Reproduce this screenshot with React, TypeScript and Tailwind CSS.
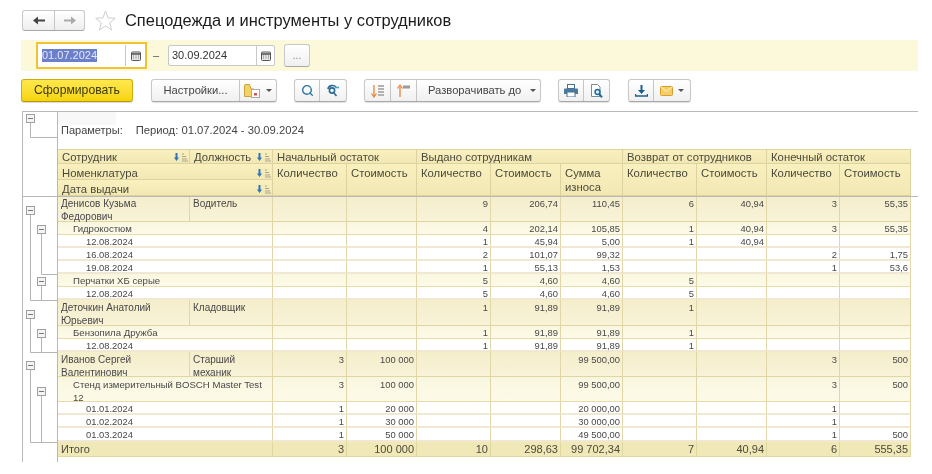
import type { ReactNode } from "react";
import { Search } from "lucide-react";

type Row = {
  level: 0 | 1 | 2;
  name: string;
  job?: string;
  h: string;
  inner: string;
  vals: string[];
};

const PERSON = "h-[25px] pt-[2px] leading-[12.7px]";
const PERSON_LOW = "h-[24px] pt-[2px] leading-[12.5px]";
const ITEM = "h-[12px] pt-px leading-[12px]";
const DATE = "h-[11px] pt-px leading-[11px]";

const ROWS: Row[] = [
  { level: 0, name: "Денисов Кузьма\nФедорович", job: "Водитель", h: "h-[26px]", inner: PERSON, vals: ["", "", "9", "206,74", "110,45", "6", "40,94", "3", "55,35"] },
  { level: 1, name: "Гидрокостюм", h: "h-[13px]", inner: ITEM, vals: ["", "", "4", "202,14", "105,85", "1", "40,94", "3", "55,35"] },
  { level: 2, name: "12.08.2024", h: "h-[13px]", inner: DATE, vals: ["", "", "1", "45,94", "5,00", "1", "40,94", "", ""] },
  { level: 2, name: "16.08.2024", h: "h-[13px]", inner: DATE, vals: ["", "", "2", "101,07", "99,32", "", "", "2", "1,75"] },
  { level: 2, name: "19.08.2024", h: "h-[13px]", inner: DATE, vals: ["", "", "1", "55,13", "1,53", "", "", "1", "53,6"] },
  { level: 1, name: "Перчатки ХБ серые", h: "h-[13px]", inner: ITEM, vals: ["", "", "5", "4,60", "4,60", "5", "", "", ""] },
  { level: 2, name: "12.08.2024", h: "h-[13px]", inner: DATE, vals: ["", "", "5", "4,60", "4,60", "5", "", "", ""] },
  { level: 0, name: "Деточкин Анатолий\nЮрьевич", job: "Кладовщик", h: "h-[26px]", inner: PERSON, vals: ["", "", "1", "91,89", "91,89", "1", "", "", ""] },
  { level: 1, name: "Бензопила Дружба", h: "h-[13px]", inner: ITEM, vals: ["", "", "1", "91,89", "91,89", "1", "", "", ""] },
  { level: 2, name: "12.08.2024", h: "h-[13px]", inner: DATE, vals: ["", "", "1", "91,89", "91,89", "1", "", "", ""] },
  { level: 0, name: "Иванов Сергей\nВалентинович", job: "Старший\nмеханик", h: "h-[25px]", inner: PERSON_LOW, vals: ["3", "100 000", "", "", "99 500,00", "", "", "3", "500"] },
  { level: 1, name: "Стенд измерительный BOSCH Master Test\n12", h: "h-[25px]", inner: PERSON_LOW, vals: ["3", "100 000", "", "", "99 500,00", "", "", "3", "500"] },
  { level: 2, name: "01.01.2024", h: "h-[13px]", inner: DATE, vals: ["1", "20 000", "", "", "20 000,00", "", "", "1", ""] },
  { level: 2, name: "01.02.2024", h: "h-[13px]", inner: DATE, vals: ["1", "30 000", "", "", "30 000,00", "", "", "1", ""] },
  { level: 2, name: "01.03.2024", h: "h-[14px]", inner: "h-[12px] pt-px leading-[11px]", vals: ["1", "50 000", "", "", "49 500,00", "", "", "1", "500"] },
];

const TOTALS = ["3", "100 000", "10", "298,63", "99 702,34", "7", "40,94", "6", "555,35"];

const COLS = [132, 83, 74, 70, 74, 70, 62, 74, 70, 73, 71];

const LEVEL_BG = {
  0: "bg-linear-to-b from-[#f5eecb] to-[#f8f3d9] border-b-[#e0d6a0]",
  1: "bg-linear-to-b from-[#f9f6e0] to-[#fdfbe8] border-b-[#e6dcaa]",
  2: "bg-white border-b-2 border-b-[#f0e8d2]",
};
const LEVEL_PAD = { 0: "pl-[3px] text-[10px]", 1: "pl-[15px] text-[9.6px]", 2: "pl-[28px]" };
const HEAD = "bg-linear-to-b from-[#f9f0bf] to-[#f2e8b4] border-b border-r border-[#ded3a0] pl-[4px] align-top text-[11.3px] text-[#4b4a3c] font-normal text-left";
const HEAD_SUB = `${HEAD} pt-[3px] leading-[12px]`;
const HEAD_SPAN = `${HEAD} pt-[2px] leading-[14px]`;

function SortIcon() {
  return (
    <svg width="16" height="10" viewBox="0 0 16 10" className="shrink-0">
      <path d="M3.5 1v5.5" stroke="#2f74b5" strokeWidth="2" />
      <path d="M1 5.5h5L3.5 9z" fill="#2f74b5" />
      <path d="M9 2h2M9 4.5h4M9 7h5M9 9h6" stroke="#a9a68c" strokeWidth="1" />
    </svg>
  );
}

function Caret() {
  return (
    <svg width="6" height="3" viewBox="0 0 6 3" className="shrink-0">
      <path d="M0 0h6L3 3z" fill="#555" />
    </svg>
  );
}

function CalendarIcon() {
  return (
    <svg width="10" height="10" viewBox="0 0 10 10">
      <rect x="0.5" y="1" width="9" height="8.5" rx="1" fill="#e6e6e6" stroke="#555" />
      <path d="M0.5 3h9" stroke="#444" strokeWidth="1.4" />
      <path d="M2 5h1M4.5 5h1M7 5h1M2 7h1M4.5 7h1M7 7h1" stroke="#777" />
    </svg>
  );
}

function ExpandIcon({ up }: { up?: boolean }) {
  return (
    <svg width="14" height="14" viewBox="0 0 14 14">
      {up ? (
        <>
          <path d="M3 13V3" stroke="#e8813a" strokeWidth="1.3" />
          <path d="M0.5 4.5L3 1l2.5 3.5" fill="none" stroke="#e8813a" strokeWidth="1.2" />
          <rect x="6" y="1.5" width="7" height="3" fill="#9c9c9c" />
        </>
      ) : (
        <>
          <path d="M3 1v11" stroke="#e8813a" strokeWidth="1.3" />
          <path d="M0.5 9.5L3 13l2.5-3.5" fill="none" stroke="#e8813a" strokeWidth="1.2" />
          <path d="M7 2h6M7 5h6M7 8h6M7 11h6" stroke="#9c9c9c" strokeWidth="1.6" />
        </>
      )}
    </svg>
  );
}

function Seg({ w, children, last }: { w: string; children: ReactNode; last?: boolean }) {
  return (
    <div className={`${w} h-full flex items-center justify-center gap-[5px] ${last ? "" : "border-r border-[#c6c6c6]"}`}>
      {children}
    </div>
  );
}

function Group({ children }: { children: ReactNode }) {
  return (
    <div className="h-[23px] flex rounded-[3px] border border-[#c8c8c8] border-b-[#a8a8a8] bg-linear-to-b from-white to-[#f0f0f0] shadow-[0_1px_1px_rgba(0,0,0,0.12)]">
      {children}
    </div>
  );
}

function Tree() {
  const line = "#b4b4b4";
  const box = (x: number, y: number) => (
    <g key={`${x}-${y}`}>
      <rect x={x + 0.5} y={y + 0.5} width="8" height="8" fill="#f4f4f4" stroke="#a0a0a0" />
      <path d={`M${x + 2} ${y + 4.5}h5`} stroke="#777" />
    </g>
  );
  return (
    <svg width="36" height="351" viewBox="0 0 36 351" className="block">
      <g fill="none" stroke={line} strokeWidth="1">
        <path d="M8.5 11V26.5H36" />
        <path d="M8.5 103V189.5H36" />
        <path d="M19.5 122V163.5H36" />
        <path d="M19.5 174V189" />
        <path d="M8.5 207V241.5H36" />
        <path d="M19.5 226V241" />
        <path d="M8.5 258V331.5H36" />
        <path d="M19.5 284V331" />
      </g>
      {[
        [4, 3],
        [4, 95],
        [15, 114],
        [15, 166],
        [4, 199],
        [15, 218],
        [4, 250],
        [15, 276],
      ].map(([x, y]) => box(x, y))}
    </svg>
  );
}

function HeadTop({ colSpan, children }: { colSpan?: number; children: ReactNode }) {
  return (
    <th colSpan={colSpan} className={`${HEAD} border-t`}>
      <div className="h-[13px] pt-px leading-[13px] flex items-center justify-between whitespace-nowrap">{children}</div>
    </th>
  );
}

function Report() {
  return (
    <table className="table-fixed border-separate border-spacing-0 w-[853px]">
      <colgroup>
        {COLS.map((w, i) => (
          <col key={i} style={{ width: w }} />
        ))}
      </colgroup>
      <thead>
        <tr className="h-[15px]">
          <HeadTop>
            Сотрудник
            <SortIcon />
          </HeadTop>
          <HeadTop>
            Должность
            <SortIcon />
          </HeadTop>
          <HeadTop colSpan={2}>Начальный остаток</HeadTop>
          <HeadTop colSpan={3}>Выдано сотрудникам</HeadTop>
          <HeadTop colSpan={2}>Возврат от сотрудников</HeadTop>
          <HeadTop colSpan={2}>Конечный остаток</HeadTop>
        </tr>
        <tr className="h-[16px]">
          <th colSpan={2} className={HEAD_SUB}>
            <div className="h-[12px] flex items-center justify-between">
              Номенклатура
              <SortIcon />
            </div>
          </th>
          {["Количество", "Стоимость", "Количество", "Стоимость"].map((t, i) => (
            <th key={i} rowSpan={2} className={HEAD_SPAN}>{t}</th>
          ))}
          <th rowSpan={2} className={HEAD_SPAN}>Сумма<br />износа</th>
          {["Количество", "Стоимость", "Количество", "Стоимость"].map((t, i) => (
            <th key={i} rowSpan={2} className={HEAD_SPAN}>{t}</th>
          ))}
        </tr>
        <tr className="h-[16px]">
          <th colSpan={2} className={HEAD_SUB}>
            <div className="h-[12px] flex items-center justify-between">
              Дата выдачи
              <SortIcon />
            </div>
          </th>
        </tr>
      </thead>
      <tbody className="text-[9.4px] text-[#484848]">
        {ROWS.map((r, i) => {
          const cell = `${r.h} ${LEVEL_BG[r.level]} border-b border-r border-r-[#e0d6a8] align-top`;
          return (
            <tr key={i}>
              {r.job ? (
                <>
                  <td className={`${cell} ${LEVEL_PAD[0]} whitespace-pre-line`}><div className={r.inner}>{r.name}</div></td>
                  <td className={`${cell} ${LEVEL_PAD[0]} whitespace-pre-line`}><div className={r.inner}>{r.job}</div></td>
                </>
              ) : (
                <td colSpan={2} className={`${cell} ${LEVEL_PAD[r.level]} whitespace-pre-line`}><div className={r.inner}>{r.name}</div></td>
              )}
              {r.vals.map((v, j) => (
                <td key={j} className={`${cell} text-right pr-[2px] ${j === 6 ? "border-r-[#d2bf82]" : ""}`}><div className={r.inner}>{v}</div></td>
              ))}
            </tr>
          );
        })}
        <tr className="h-[15px]">
          <td colSpan={2} className="bg-[#f1e8b8] border-b border-r border-[#e0d6a0] pl-[3px] pt-px text-[11px] leading-[13px] text-[#4b4a3c]">Итого</td>
          {TOTALS.map((v, j) => (
            <td key={j} className="bg-[#f1e8b8] border-b border-r border-[#e0d6a0] text-right pr-[2px] pt-px text-[11px] leading-[13px] text-[#4b4a3c]">{v}</td>
          ))}
        </tr>
      </tbody>
    </table>
  );
}

export default function App() {
  return (
    <div className="w-[932px] h-[474px] overflow-hidden bg-white pt-[10px] blur-[0.4px] font-['Liberation_Sans',sans-serif]">
      {/* Title */}
      <div className="h-[21px] pl-[22px] flex items-center">
        <div className="w-[63px] h-[21px] flex rounded-[3px] border border-[#c8c8c8] border-b-[#a8a8a8] bg-linear-to-b from-white to-[#eeeeee]">
          <Seg w="w-[32px]">
            <svg width="12" height="9" viewBox="0 0 12 9">
              <path d="M12 4.5H4" stroke="#444" strokeWidth="2" />
              <path d="M5 0.5L0 4.5 5 8.5z" fill="#444" />
            </svg>
          </Seg>
          <Seg w="flex-1" last>
            <svg width="12" height="9" viewBox="0 0 12 9">
              <path d="M0 4.5H8" stroke="#aaa" strokeWidth="2" />
              <path d="M7 0.5l5 4-5 4z" fill="#aaa" />
            </svg>
          </Seg>
        </div>
        <svg width="21" height="21" viewBox="0 0 21 21" className="ml-[10px]">
          <path d="M10.5 1l2.6 6.9 7.2.4-5.6 4.6 1.9 7-6.1-4-6.1 4 1.9-7L.7 8.3l7.2-.4z" fill="#fff" stroke="#c8c8c8" strokeWidth="0.9" />
        </svg>
        <h1 className="ml-[9px] text-[16.45px] leading-[21px] font-normal text-[#1c1c1c] whitespace-nowrap">Спецодежда и инструменты у сотрудников</h1>
      </div>

      {/* Period */}
      <div className="mt-[9px] ml-[21px] w-[897px] h-[31px] bg-[#fbf9da] flex items-center text-[11px] text-[#333]">
        <div className="ml-[15px] w-[111px] h-[27px] border-2 border-[#f2c230] bg-white flex items-center">
          <span className="ml-[4px] bg-[#6c7fca] text-[#e4e8f6] leading-[13px]">01.07.2024</span>
          <div className="ml-auto w-[20px] h-[21px] border-l border-[#c8c8c8] flex items-center justify-center">
            <CalendarIcon />
          </div>
        </div>
        <span className="ml-[6px] w-[15px] text-[#555]">–</span>
        <div className="w-[107px] h-[21px] border border-[#c8c8c8] rounded-[2px] bg-white flex items-center">
          <span className="ml-[3px]">30.09.2024</span>
          <div className="ml-auto w-[18px] h-full border-l border-[#c8c8c8] flex items-center justify-center">
            <CalendarIcon />
          </div>
        </div>
        <div className="ml-[9px] w-[26px] h-[23px] rounded-[3px] border border-[#c8c8c8] border-b-[#a8a8a8] bg-linear-to-b from-white to-[#f0f0f0] flex items-center justify-center text-[#888] text-[10px]">...</div>
      </div>

      {/* Toolbar */}
      <div className="mt-[8px] ml-[21px] h-[23px] flex items-center text-[11.2px] text-[#444]">
        <div className="w-[112px] h-[23px] rounded-[3px] border border-[#d0ac10] border-b-[#b59510] bg-linear-to-b from-[#ffe84a] to-[#f6d400] flex items-center justify-center text-[#3d3a10] text-[12.2px] shadow-[0_1px_1px_rgba(0,0,0,0.15)]">Сформировать</div>

        <div className="ml-[18px]">
          <Group>
            <Seg w="w-[88px]">Настройки...</Seg>
            <Seg w="w-[36px]" last>
              <svg width="17" height="15" viewBox="0 0 17 15">
                <path d="M0.5 3V13.5H10V6H7L5.5 1.5H1z" fill="#f3d267" stroke="#c9a13a" />
                <rect x="7.5" y="6.5" width="8" height="8" fill="#fff" stroke="#aaa" />
                <rect x="10" y="10" width="3" height="2.5" fill="#d9534f" />
              </svg>
              <Caret />
            </Seg>
          </Group>
        </div>

        <div className="ml-[17px]">
          <Group>
            <Seg w="w-[25px]"><Search size={13} strokeWidth={2.6} className="text-[#2a74a8]" /></Seg>
            <Seg w="w-[26px]" last>
              <svg width="14" height="13" viewBox="0 0 14 13" fill="none" stroke="#2a6a96" strokeWidth="1.6">
                <path d="M2 5a4.5 4 0 0 1 8-2" />
                <circle cx="6" cy="6.5" r="2.6" />
                <path d="M8 9l2.5 3" />
                <path d="M9 3.5h4" stroke="#4aa3c8" />
              </svg>
            </Seg>
          </Group>
        </div>

        <div className="ml-[17px]">
          <Group>
            <Seg w="w-[26px]"><ExpandIcon /></Seg>
            <Seg w="w-[26px]"><ExpandIcon up /></Seg>
            <div className="w-[123px] h-full flex items-center pl-[11px] whitespace-nowrap">
              Разворачивать до
              <span className="ml-[9px]"><Caret /></span>
            </div>
          </Group>
        </div>

        <div className="ml-[17px]">
          <Group>
            <Seg w="w-[25px]">
              <svg width="14" height="13" viewBox="0 0 14 13">
                <rect x="3.5" y="0.5" width="7" height="4" fill="#fff" stroke="#48708f" />
                <path d="M1 4.5h12a1 1 0 0 1 1 1V10H0V5.5a1 1 0 0 1 1-1z" fill="#4a7aa2" />
                <rect x="3" y="8" width="8" height="5" fill="#fff" stroke="#48708f" />
              </svg>
            </Seg>
            <Seg w="w-[25px]" last>
              <svg width="13" height="14" viewBox="0 0 13 14">
                <path d="M1.5 0.5H7.5L10 3V12.5H1.5z" fill="#fff" stroke="#7c8b96" />
                <circle cx="7.5" cy="8" r="2.4" fill="#dcebf4" stroke="#1f6a9c" strokeWidth="1.5" />
                <path d="M9 10l3 3.2" stroke="#1f6a9c" strokeWidth="2" />
              </svg>
            </Seg>
          </Group>
        </div>

        <div className="ml-[18px]">
          <Group>
            <Seg w="w-[25px]">
              <svg width="13" height="12" viewBox="0 0 13 12">
                <path d="M6.5 0v6" stroke="#1f5f8c" strokeWidth="2" />
                <path d="M3 5h7L6.5 9z" fill="#1f5f8c" />
                <path d="M0.5 9v2h12V9" fill="none" stroke="#1f5f8c" strokeWidth="1.4" />
              </svg>
            </Seg>
            <Seg w="w-[36px]" last>
              <svg width="13" height="10" viewBox="0 0 13 10">
                <rect x="0.5" y="0.5" width="12" height="9" rx="1" fill="#f4cf68" stroke="#d9a030" />
                <path d="M1 1l5.5 4.5L12 1" fill="none" stroke="#fff3c4" />
              </svg>
              <Caret />
            </Seg>
          </Group>
        </div>
      </div>

      {/* Report */}
      <div className="relative mt-[9px] ml-[22px] w-[896px] h-[351px] border-t border-l border-[#b8b8b8] flex">
        <div className="w-[35px] shrink-0 -ml-px -mt-px">
          <Tree />
        </div>
        <div className="border-l border-[#b8b8b8] -mt-px">
          <div className="h-[38px] relative">
            <div className="absolute left-0 top-[1px] w-[58px] h-[13px] bg-[#f8f8f8]" />
            <div className="pt-[13px] pl-[3px] text-[11px] leading-[13px] text-[#444] whitespace-nowrap">
              Параметры:<span className="ml-[13px] text-[11.25px]">Период: 01.07.2024 - 30.09.2024</span>
            </div>
          </div>
          <Report />
        </div>
        <div className="absolute left-0 right-0 top-[84px] h-px bg-[#b8b8b8]" />
      </div>
    </div>
  );
}
